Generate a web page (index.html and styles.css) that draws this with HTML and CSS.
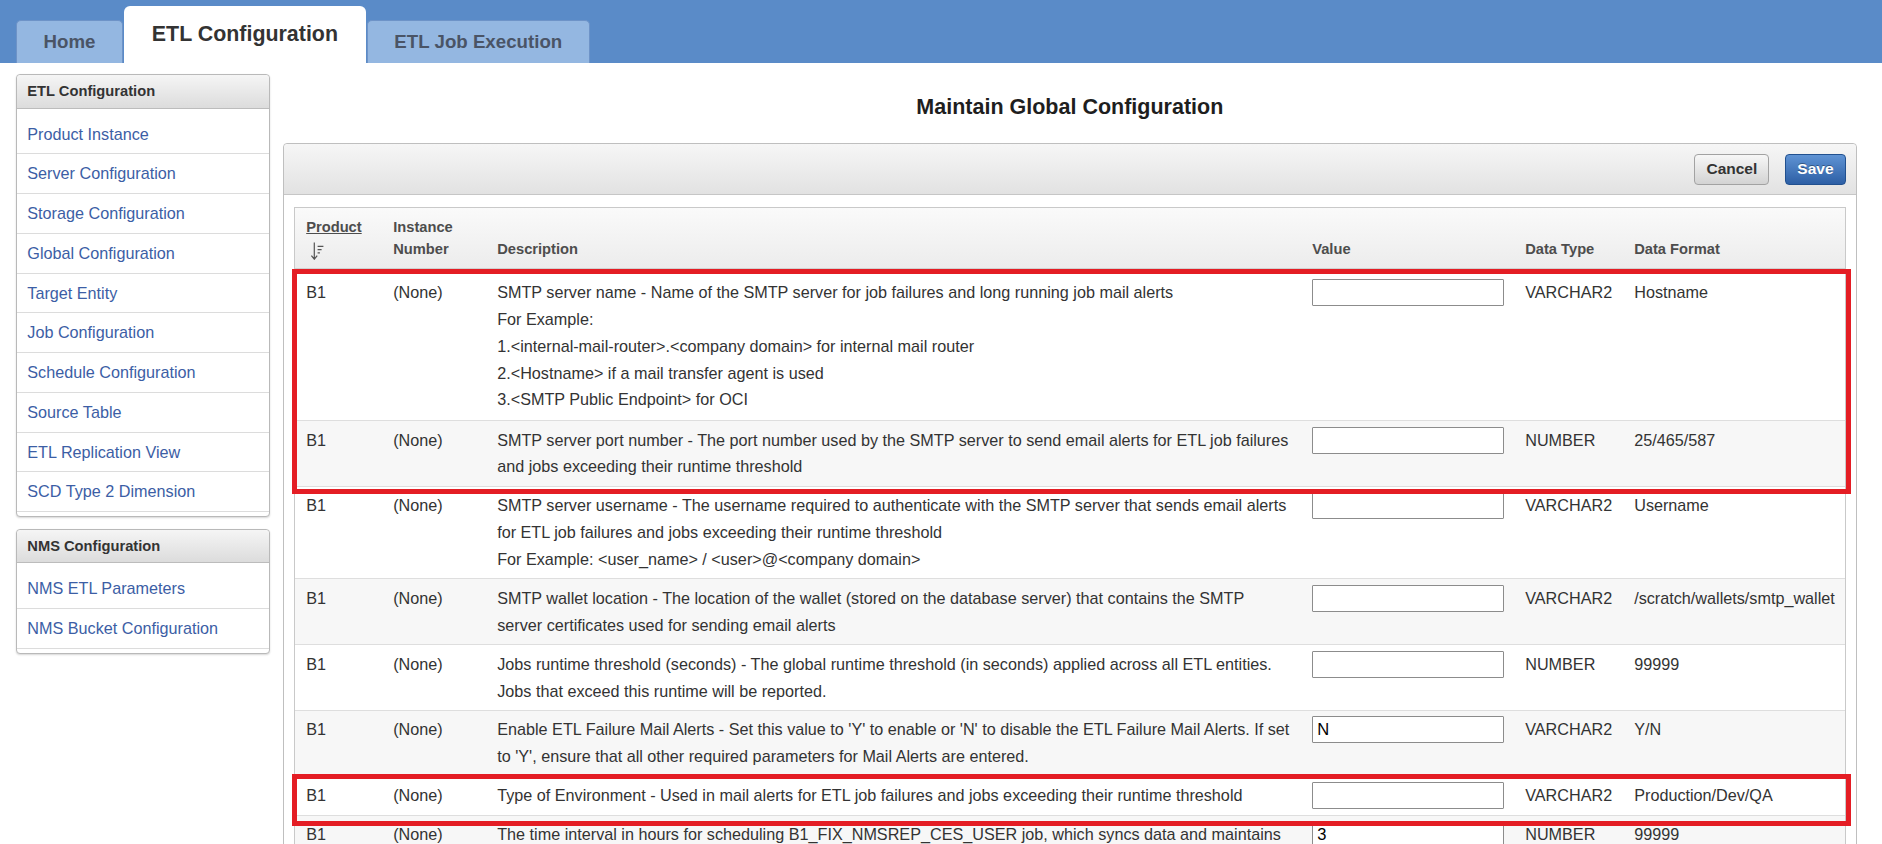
FILE: index.html
```html
<!DOCTYPE html>
<html lang="en">
<head>
<meta charset="utf-8">
<title>Maintain Global Configuration</title>
<link rel="stylesheet" href="styles.css">
</head>
<body>
<div class="topbar">
  <div class="tab">Home</div>
  <div class="tab active">ETL Configuration</div>
  <div class="tab">ETL Job Execution</div>
</div>
<div class="layout">
  <aside class="sidebar">
    <div class="navbox">
      <div class="navbox-head">ETL Configuration</div>
      <div class="navlist">
        <div class="navitem">Product Instance</div>
        <div class="navitem">Server Configuration</div>
        <div class="navitem">Storage Configuration</div>
        <div class="navitem">Global Configuration</div>
        <div class="navitem">Target Entity</div>
        <div class="navitem">Job Configuration</div>
        <div class="navitem">Schedule Configuration</div>
        <div class="navitem">Source Table</div>
        <div class="navitem">ETL Replication View</div>
        <div class="navitem">SCD Type 2 Dimension</div>
      </div>
    </div>
    <div class="navbox">
      <div class="navbox-head">NMS Configuration</div>
      <div class="navlist">
        <div class="navitem">NMS ETL Parameters</div>
        <div class="navitem">NMS Bucket Configuration</div>
      </div>
    </div>
  </aside>
  <main class="main">
    <h1 class="title">Maintain Global Configuration</h1>
    <div class="panel">
      <div class="toolbar">
        <button class="btn btn-cancel">Cancel</button>
        <button class="btn btn-save">Save</button>
      </div>
      <div class="panel-body">
        <div class="table">
          <div class="thead">
            <div class="th"><span class="sortlink">Product</span><svg class="sort" width="14" height="18" viewBox="0 0 14 18"><path d="M4.3 0.6V17M1.4 13.6L4.3 17.2L7.2 13.6M7.6 4.3H13.4M7.6 7.6H11.6M7.6 10.9H9.9" fill="none" stroke="#555" stroke-width="1.2"/></svg></div>
            <div class="th">Instance<br>Number</div>
            <div class="th">Description</div>
            <div class="th">Value</div>
            <div class="th">Data Type</div>
            <div class="th">Data Format</div>
          </div>
          <div class="hl hl-a">
            <div class="row first">
              <div class="td">B1</div>
              <div class="td">(None)</div>
              <div class="td desc">SMTP server name - Name of the SMTP server for job failures and long running job mail alerts<br>For Example:<br>1.&lt;internal-mail-router&gt;.&lt;company domain&gt; for internal mail router<br>2.&lt;Hostname&gt; if a mail transfer agent is used<br>3.&lt;SMTP Public Endpoint&gt; for OCI</div>
              <div class="td"><input class="val" type="text" value=""></div>
              <div class="td">VARCHAR2</div>
              <div class="td">Hostname</div>
            </div>
            <div class="row alt">
              <div class="td">B1</div>
              <div class="td">(None)</div>
              <div class="td desc">SMTP server port number - The port number used by the SMTP server to send email alerts for ETL job failures<br>and jobs exceeding their runtime threshold</div>
              <div class="td"><input class="val" type="text" value=""></div>
              <div class="td">NUMBER</div>
              <div class="td">25/465/587</div>
            </div>
          </div>
          <div class="row">
            <div class="td">B1</div>
            <div class="td">(None)</div>
            <div class="td desc">SMTP server username - The username required to authenticate with the SMTP server that sends email alerts<br>for ETL job failures and jobs exceeding their runtime threshold<br>For Example: &lt;user_name&gt; / &lt;user&gt;@&lt;company domain&gt;</div>
            <div class="td"><input class="val" type="text" value=""></div>
            <div class="td">VARCHAR2</div>
            <div class="td">Username</div>
          </div>
          <div class="row alt">
            <div class="td">B1</div>
            <div class="td">(None)</div>
            <div class="td desc">SMTP wallet location - The location of the wallet (stored on the database server) that contains the SMTP<br>server certificates used for sending email alerts</div>
            <div class="td"><input class="val" type="text" value=""></div>
            <div class="td">VARCHAR2</div>
            <div class="td">/scratch/wallets/smtp_wallet</div>
          </div>
          <div class="row">
            <div class="td">B1</div>
            <div class="td">(None)</div>
            <div class="td desc">Jobs runtime threshold (seconds) - The global runtime threshold (in seconds) applied across all ETL entities.<br>Jobs that exceed this runtime will be reported.</div>
            <div class="td"><input class="val" type="text" value=""></div>
            <div class="td">NUMBER</div>
            <div class="td">99999</div>
          </div>
          <div class="row alt">
            <div class="td">B1</div>
            <div class="td">(None)</div>
            <div class="td desc">Enable ETL Failure Mail Alerts - Set this value to 'Y' to enable or 'N' to disable the ETL Failure Mail Alerts. If set<br>to 'Y', ensure that all other required parameters for Mail Alerts are entered.</div>
            <div class="td"><input class="val" type="text" value="N"></div>
            <div class="td">VARCHAR2</div>
            <div class="td">Y/N</div>
          </div>
          <div class="hl hl-b">
            <div class="row">
              <div class="td">B1</div>
              <div class="td">(None)</div>
              <div class="td desc">Type of Environment - Used in mail alerts for ETL job failures and jobs exceeding their runtime threshold</div>
              <div class="td"><input class="val" type="text" value=""></div>
              <div class="td">VARCHAR2</div>
              <div class="td">Production/Dev/QA</div>
            </div>
          </div>
          <div class="row alt">
            <div class="td">B1</div>
            <div class="td">(None)</div>
            <div class="td desc">The time interval in hours for scheduling B1_FIX_NMSREP_CES_USER job, which syncs data and maintains<br>the NMS replication users.</div>
            <div class="td"><input class="val" type="text" value="3"></div>
            <div class="td">NUMBER</div>
            <div class="td">99999</div>
          </div>
        </div>
      </div>
    </div>
  </main>
</div>
</body>
</html>
```

FILE: styles.css
```css
html, body {
  margin: 0;
  padding: 0;
  height: 844px;
  overflow: hidden;
  background: #ffffff;
  font-family: "Liberation Sans", Arial, sans-serif;
  color: #333333;
}

/* ---------- top tab bar ---------- */
.topbar {
  height: 63px;
  box-sizing: border-box;
  background: #5a8bc8;
  display: flex;
  align-items: flex-end;
  padding-left: 15.7px;
}
.tab {
  height: 43.5px;
  box-sizing: border-box;
  padding: 0 26.8px;
  margin-right: 1px;
  display: flex;
  align-items: center;
  background: #94b7e1;
  border: 1px solid #6e93c7;
  border-bottom: none;
  border-radius: 5px 5px 0 0;
  font-weight: bold;
  font-size: 18.7px;
  color: #4a5466;
}
.tab.active {
  height: 57px;
  padding: 0 27.6px;
  background: #ffffff;
  border: none;
  border-radius: 6px 6px 0 0;
  font-size: 21.4px;
  color: #333333;
}

/* ---------- layout ---------- */
.layout {
  display: flex;
  align-items: flex-start;
}
.sidebar {
  width: 254.5px;
  flex-shrink: 0;
  margin: 11px 0 0 15.5px;
}
.main {
  flex: 1;
  min-width: 0;
  margin: 0 25px 0 12.7px;
  padding-top: 31px;
}

/* ---------- sidebar ---------- */
.navbox {
  border: 1px solid #b9b9b9;
  border-radius: 4px;
  background: #ffffff;
  box-shadow: 0 1px 2px rgba(0, 0, 0, 0.16);
  margin-bottom: 11.5px;
}
.navbox-head {
  height: 32.7px;
  line-height: 32.7px;
  padding-left: 10.8px;
  background: linear-gradient(#f5f5f5, #dcdcdc);
  border-bottom: 1px solid #bcbcbc;
  border-radius: 4px 4px 0 0;
  font-weight: bold;
  font-size: 14.7px;
  color: #333333;
}
.navlist {
  padding: 6px 0 4px;
}
.navitem {
  height: 38.75px;
  line-height: 38.75px;
  padding-left: 10.8px;
  border-bottom: 1px solid #dcdcdc;
  font-size: 16.2px;
  color: #3c5ea5;
}

/* ---------- main ---------- */
.title {
  margin: 0 0 23px;
  text-align: center;
  font-size: 21.5px;
  line-height: 26px;
  font-weight: bold;
  color: #1e1e1e;
}
.panel {
  border: 1px solid #bfbfbf;
  border-radius: 4px;
  background: #ffffff;
}
.toolbar {
  height: 50px;
  display: flex;
  justify-content: flex-end;
  align-items: center;
  gap: 16px;
  padding-right: 10.5px;
  background: linear-gradient(#f6f6f6, #e2e2e2);
  border-bottom: 1px solid #c6c6c6;
  border-radius: 4px 4px 0 0;
}
.btn {
  height: 31px;
  box-sizing: border-box;
  padding: 0 11px;
  border-radius: 4px;
  font-family: "Liberation Sans", Arial, sans-serif;
  font-weight: bold;
  font-size: 15.5px;
}
.btn-cancel {
  background: linear-gradient(#f7f7f7, #d3d3d3);
  border: 1px solid #a2a2a2;
  color: #333333;
}
.btn-save {
  background: linear-gradient(#5f93d4, #2d5fa5);
  border: 1px solid #21508f;
  color: #ffffff;
  text-shadow: 0 -1px 0 rgba(0, 0, 0, 0.35);
}
.panel-body {
  padding: 11.6px 10.5px 0;
}

/* ---------- table ---------- */
.table {
  border: 1px solid #c9c9c9;
}
.thead,
.row {
  display: grid;
  grid-template-columns: 87px 104px 815px 213px 109px 1fr;
}
.thead {
  align-items: end;
  padding: 9.85px 0 6.75px;
  background: linear-gradient(#fafafa, #ececec);
  border-bottom: 1px solid #d0d0d0;
  font-weight: bold;
  font-size: 14.7px;
  line-height: 21.7px;
  color: #4d4d4d;
}
.th {
  padding: 0 11px;
}
.sortlink {
  text-decoration: underline;
}
.sort {
  display: block;
  margin: 2.7px 0 1px 4px;
}
.row {
  border-top: 1px solid #dedede;
  padding: 5.6px 0;
  font-size: 16.2px;
  line-height: 26.8px;
  color: #333333;
}
.row.first {
  border-top: none;
  padding: 10.6px 0 6.8px;
}
.row.alt {
  background: #f7f7f7;
}
.td {
  padding: 0 11px;
  white-space: nowrap;
}
.val {
  display: block;
  width: 192px;
  height: 27px;
  box-sizing: border-box;
  margin: 0;
  padding: 0 4px;
  border: 1px solid #8c8c8c;
  border-radius: 1px;
  background: #ffffff;
  font-family: "Liberation Sans", Arial, sans-serif;
  font-size: 16.5px;
  color: #000000;
}

/* ---------- annotation boxes ---------- */
.hl {
  position: relative;
}
.hl::after {
  content: "";
  position: absolute;
  left: -3.3px;
  right: -6.7px;
  border: 5.7px solid #e41d24;
  pointer-events: none;
}
.hl-a::after {
  top: 0.7px;
  bottom: -8.5px;
}
.hl-b::after {
  top: -1.5px;
  bottom: -10.9px;
}
```
